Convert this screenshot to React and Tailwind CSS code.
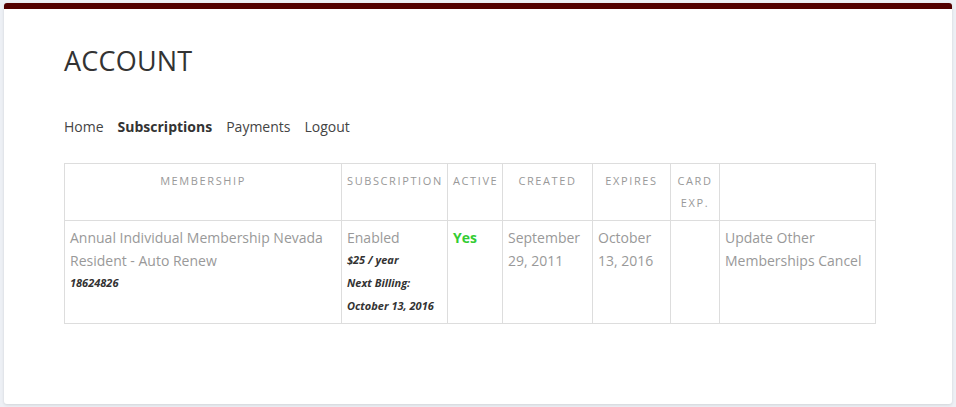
export default function App() {
  const th = "border border-[#dddddd] px-[5px] pt-[6px] pb-[6px] align-top text-center text-[11px] leading-[22px] tracking-[1.6px] uppercase font-normal text-[#999999]";
  const td = "border border-[#dddddd] px-[5px] pt-[5px] pb-[6px] align-top text-left text-[14px] leading-[23px] text-[#999999]";
  const small = "block text-[11px] leading-[23px] font-bold italic text-[#333333]";
  return (
    <div className="min-h-[407px] bg-[#edf0f5] pt-[3px] px-[4px] pb-[3px]" style={{ fontFamily: '"Open Sans", "Liberation Sans", sans-serif' }}>
      <div className="h-[401px] bg-white border-t-[6px] border-[#520000] rounded-[3px] shadow-[0_1px_3px_rgba(0,0,0,0.12)] pl-[60px] pt-[32px]">
        <h1 className="text-[27px] leading-[40px] tracking-[0.2px] text-[#333333] font-normal">ACCOUNT</h1>
        <nav className="mt-[36px] flex gap-[14px] text-[14px] leading-[20px] text-[#444444]">
          <span>Home</span>
          <span className="font-bold text-[#333333]">Subscriptions</span>
          <span>Payments</span>
          <span>Logout</span>
        </nav>
        <table className="mt-[26px] border-collapse table-fixed w-[811px]">
          <colgroup>
            <col className="w-[277px]" />
            <col className="w-[106px]" />
            <col className="w-[55px]" />
            <col className="w-[90px]" />
            <col className="w-[78px]" />
            <col className="w-[49px]" />
            <col className="w-[156px]" />
          </colgroup>
          <thead>
            <tr>
              <th className={th}>Membership</th>
              <th className={th}>Subscription</th>
              <th className={th}>Active</th>
              <th className={th}>Created</th>
              <th className={th}>Expires</th>
              <th className={th}>Card Exp.</th>
              <th className={th}></th>
            </tr>
          </thead>
          <tbody>
            <tr>
              <td className={td}>
                Annual Individual Membership Nevada Resident - Auto Renew
                <span className={small + " -mt-[1px]"}>18624826</span>
              </td>
              <td className={td}>
                Enabled
                <span className={small + " -mt-[1px]"}>$25 / year</span>
                <span className={small}>Next Billing:</span>
                <span className={small}>October 13, 2016</span>
              </td>
              <td className={td}>
                <span className="font-bold text-[#33cc33]">Yes</span>
              </td>
              <td className={td}>September 29, 2011</td>
              <td className={td}>October 13, 2016</td>
              <td className={td}></td>
              <td className={td + " text-[#444444]"}>
                Update Other Memberships Cancel
              </td>
            </tr>
          </tbody>
        </table>
      </div>
    </div>
  );
}
